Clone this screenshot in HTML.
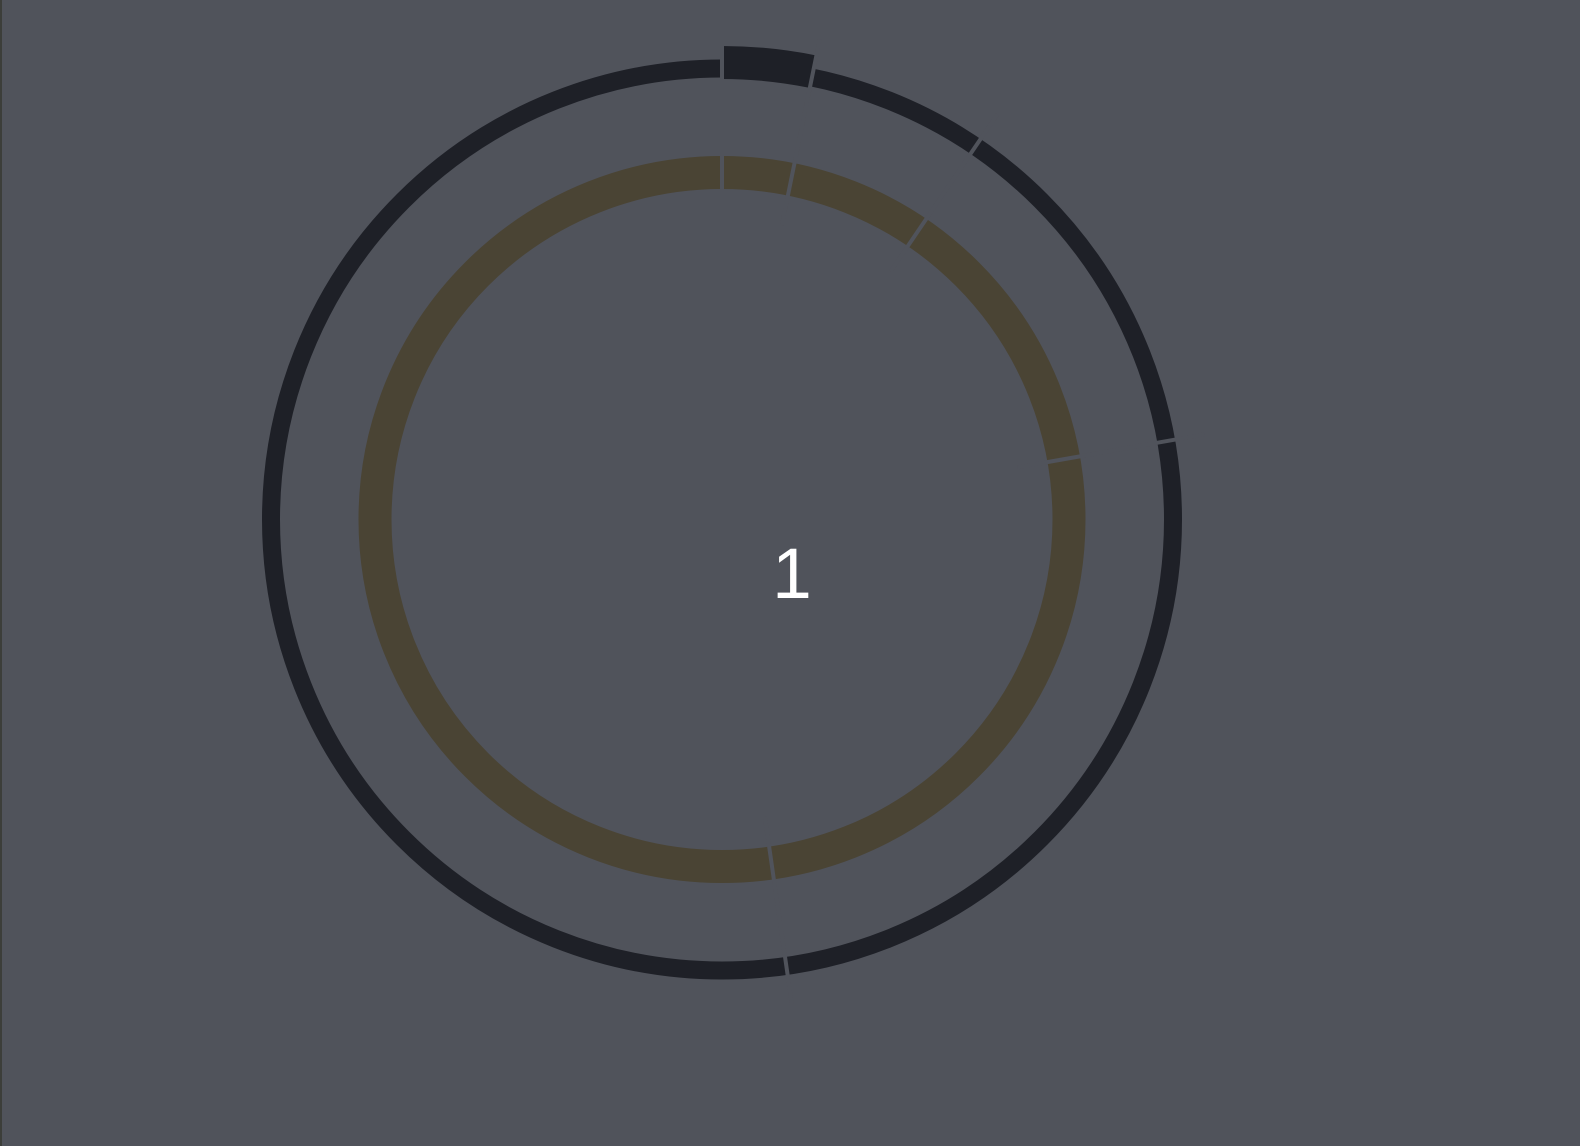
<!DOCTYPE html>
<html><head><meta charset="utf-8"><style>
html,body{margin:0;padding:0;}
body{width:1580px;height:1146px;background:#50535b;overflow:hidden;position:relative;font-family:"Liberation Sans",sans-serif;}
.lb{position:absolute;left:0;top:0;width:2px;height:1146px;background:#3c3e3a;}
.num{position:absolute;left:762px;top:530px;width:60px;text-align:center;color:#fff;font-size:71px;line-height:90px;}
</style></head><body>
<div class="lb"></div>
<svg width="1580" height="1146" style="position:absolute;left:0;top:0">
<g transform="translate(722,519.5) rotate(-90)">
<circle r="451" fill="none" stroke="#1e2027" stroke-width="18"/>
<circle r="457" fill="none" stroke="#1e2027" stroke-width="33" stroke-dasharray="91.7 3000"/>
<circle r="347" fill="none" stroke="#4a4434" stroke-width="33"/>
<g stroke="#50535b" stroke-width="4">
<line x1="300" y1="0" x2="490" y2="0"/>
<line x1="300" y1="0" x2="490" y2="0" transform="rotate(11.5)"/>
<line x1="300" y1="0" x2="490" y2="0" transform="rotate(34.2)"/>
<line x1="300" y1="0" x2="490" y2="0" transform="rotate(80)"/>
<line x1="300" y1="0" x2="490" y2="0" transform="rotate(171.8)"/>
</g>
</g>
</svg>
<div class="num">1</div>
</body></html>
